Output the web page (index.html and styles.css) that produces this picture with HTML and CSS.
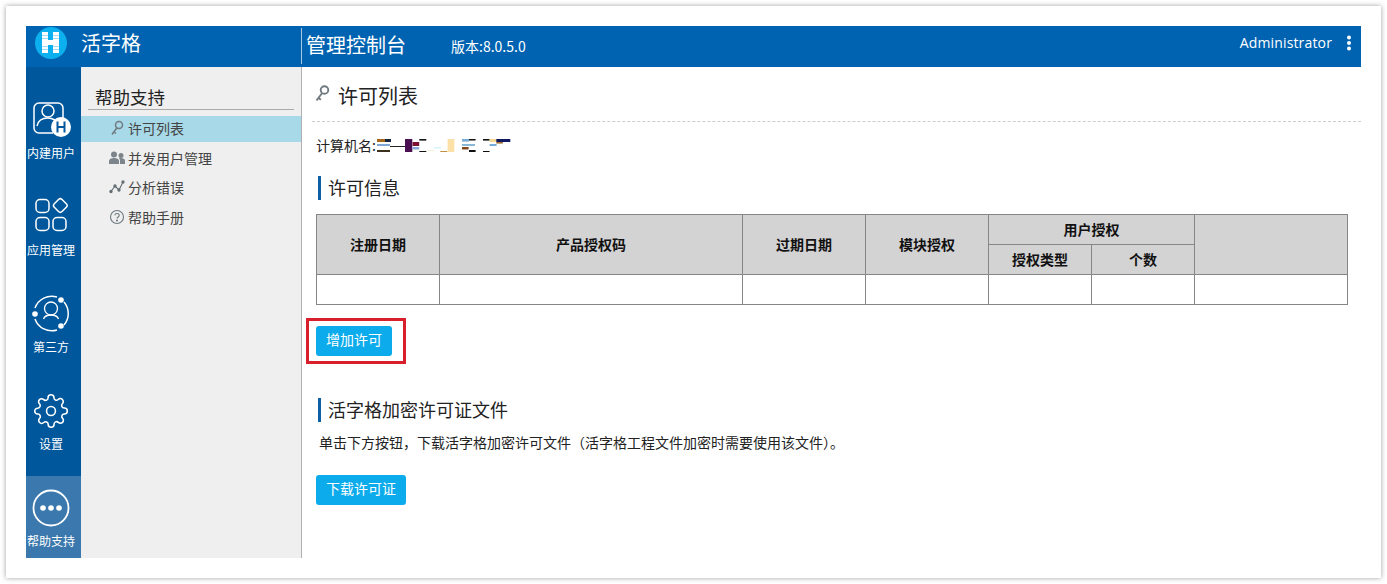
FILE: index.html
```html
<!DOCTYPE html>
<html lang="zh-CN">
<head>
<meta charset="utf-8">
<title>活字格管理控制台</title>
<link rel="stylesheet" href="styles.css">
</head>
<body>
<div class="frame">
  <div class="app">
    <header class="topbar">
      <div class="brand">
        <svg class="logo" viewBox="0 0 32 32" width="32" height="32">
          <circle cx="16" cy="16" r="16" fill="#0cb0ee"/>
          <path d="M7 5h6v21H7zM18 5h6v21h-6zM13 13h5v5h-5z" fill="#fff"/>
          <path d="M7 8.500h6M7 11.500h6M7 19.500h6M7 22.500h6M18 8.500h6M18 11.500h6M18 19.500h6M18 22.500h6" stroke="#9fe0f8" stroke-width="1"/>
        </svg>
        <span class="brand-name">活字格</span>
      </div>
      <div class="console">
        <span class="console-name">管理控制台</span>
        <span class="version">版本:8.0.5.0</span>
      </div>
      <div class="user">
        <span class="user-name">Administrator</span>
        <svg class="more" viewBox="0 0 4 16" width="4" height="16"><circle cx="2" cy="2.500" r="2" fill="#fff"/><circle cx="2" cy="8" r="2" fill="#fff"/><circle cx="2" cy="13.500" r="2" fill="#fff"/></svg>
      </div>
    </header>
    <div class="body">
      <nav class="rail">
        <a class="rail-item">
          <svg class="rail-icon" viewBox="0 0 40 40" width="40" height="40" fill="none" stroke="#fff" stroke-width="1.500">
            <path d="M22 33H8a5 5 0 0 1-5-5V8a5 5 0 0 1 5-5h19a5 5 0 0 1 5 5v11"/>
            <circle cx="17" cy="11" r="6"/>
            <path d="M6 26c1-5 4-8 11-8 3 0 5 1 7 2"/>
            <circle cx="30" cy="27" r="10" fill="#fff" stroke="none"/>
            <path d="M26.500 21.500v11M33.500 21.500v11M26.500 27h7" stroke="#00579c" stroke-width="2"/>
          </svg>
          <span>内建用户</span>
        </a>
        <a class="rail-item">
          <svg class="rail-icon" viewBox="0 0 40 40" width="40" height="40" fill="none" stroke="#fff" stroke-width="1.500">
            <rect x="5" y="2.500" width="13" height="13" rx="4"/>
            <rect x="23.800" y="3" width="11" height="11" rx="2.500" transform="rotate(45 29.300 8.500)"/>
            <rect x="5" y="20.500" width="13" height="13" rx="4"/>
            <rect x="22" y="20.500" width="13" height="13" rx="4"/>
          </svg>
          <span>应用管理</span>
        </a>
        <a class="rail-item">
          <svg class="rail-icon" viewBox="0 0 40 40" width="40" height="40" fill="none" stroke="#fff" stroke-width="1.500">
            <path d="M4 14A17.700 17.700 0 0 1 26 3M33 8A17.700 17.700 0 0 1 33 31M26 36A17.700 17.700 0 0 1 4 25"/>
            <circle cx="20" cy="14.500" r="6.500" stroke-width="1.300"/>
            <path d="M12.500 25c1-3 3.500-4 7.500-4s6.500 1 7.500 4" stroke-width="1.300"/>
            <circle cx="30" cy="6" r="2.800" fill="#fff" stroke="none"/>
            <circle cx="30" cy="32" r="2.800" fill="#fff" stroke="none"/>
            <circle cx="4" cy="20" r="2.800" fill="#fff" stroke="none"/>
          </svg>
          <span>第三方</span>
        </a>
        <a class="rail-item">
          <svg class="rail-icon" viewBox="-1.500 -1.500 27 27" width="40" height="40" fill="none" stroke="#fff" stroke-width="1.050">
            <circle cx="12" cy="12" r="3"/>
            <path d="M19.400 15a1.650 1.650 0 0 0 .33 1.820l.06.06a2 2 0 0 1 0 2.830 2 2 0 0 1-2.830 0l-.06-.06a1.650 1.650 0 0 0-1.820-.33 1.650 1.650 0 0 0-1 1.510V21a2 2 0 0 1-2 2 2 2 0 0 1-2-2v-.09A1.650 1.650 0 0 0 9 19.400a1.650 1.650 0 0 0-1.820.33l-.06.06a2 2 0 0 1-2.830 0 2 2 0 0 1 0-2.830l.06-.06a1.650 1.650 0 0 0 .33-1.820 1.650 1.650 0 0 0-1.510-1H3a2 2 0 0 1-2-2 2 2 0 0 1 2-2h.09A1.650 1.650 0 0 0 4.600 9a1.650 1.650 0 0 0-.33-1.820l-.06-.06a2 2 0 0 1 0-2.830 2 2 0 0 1 2.830 0l.06.06a1.650 1.650 0 0 0 1.820.33H9a1.650 1.650 0 0 0 1-1.510V3a2 2 0 0 1 2-2 2 2 0 0 1 2 2v.09a1.650 1.650 0 0 0 1 1.510 1.650 1.650 0 0 0 1.820-.33l.06-.06a2 2 0 0 1 2.830 0 2 2 0 0 1 0 2.830l-.06.06a1.650 1.650 0 0 0-.33 1.820V9a1.650 1.650 0 0 0 1.510 1H21a2 2 0 0 1 2 2 2 2 0 0 1-2 2h-.09a1.650 1.650 0 0 0-1.510 1z"/>
          </svg>
          <span>设置</span>
        </a>
        <a class="rail-item active">
          <svg class="rail-icon" viewBox="0 0 40 40" width="40" height="40" fill="none" stroke="#fff" stroke-width="1.800">
            <circle cx="20" cy="20" r="17.500"/>
            <circle cx="12" cy="20" r="2.800" fill="#fff" stroke="none"/>
            <circle cx="20" cy="20" r="2.800" fill="#fff" stroke="none"/>
            <circle cx="28" cy="20" r="2.800" fill="#fff" stroke="none"/>
          </svg>
          <span>帮助支持</span>
        </a>
      </nav>
      <aside class="submenu">
        <h2 class="submenu-title">帮助支持</h2>
        <ul class="submenu-list">
          <li class="submenu-item selected">
            <svg viewBox="0 0 16 16" width="16" height="16" fill="none" stroke="#6f7a80" stroke-width="1.500"><circle cx="10" cy="5" r="3.500"/><path d="M7.800 8 3 14.500M5 12l2 1.500"/></svg>
            <span>许可列表</span>
          </li>
          <li class="submenu-item">
            <svg viewBox="0 0 16 16" width="16" height="16" fill="#7c858b"><circle cx="5" cy="4.500" r="3"/><circle cx="12" cy="5.500" r="2.500"/><path d="M0 14v-3c0-2 2-3 5-3s5 1 5 3v3zM11 14v-3.500c0-1-.4-1.700-1-2.200 3-.6 6 .3 6 2.700v3z"/></svg>
            <span>并发用户管理</span>
          </li>
          <li class="submenu-item">
            <svg viewBox="0 0 16 16" width="16" height="16" fill="#636c72" stroke="#636c72" stroke-width="1.100"><path d="M2 12.500 6 7l4 4 4-8" fill="none"/><circle cx="2" cy="12.500" r="1.100"/><circle cx="6" cy="7" r="1.100"/><circle cx="10" cy="11" r="1.100"/><circle cx="14" cy="3" r="1.100"/></svg>
            <span>分析错误</span>
          </li>
          <li class="submenu-item">
            <svg viewBox="0 0 16 16" width="16" height="16" fill="none" stroke="#6f7a80" stroke-width="1.100"><circle cx="8" cy="8" r="6.500"/><path d="M5.800 6.300C6 5 7 4.500 8 4.500c1.300 0 2.200.8 2.200 1.900 0 1.500-2.200 1.600-2.200 3.200"/><circle cx="8" cy="11.500" r=".5"/></svg>
            <span>帮助手册</span>
          </li>
        </ul>
      </aside>
      <main class="content">
        <div class="page-head">
          <svg viewBox="0 0 16 18" width="16" height="20" fill="none" stroke="#6f7a80" stroke-width="1.900"><circle cx="10.500" cy="5" r="3.800"/><path d="M8 8.200 2.500 15.500M4.500 13l2.400 1.700"/></svg>
          <h1 class="page-title">许可列表</h1>
        </div>
        <div class="machine">
          <span>计算机名:</span>
          <svg class="masked" viewBox="0 0 134 13" width="134" height="13">
            <rect x="0" y="0" width="8" height="3" fill="#a8651c"/><rect x="8" y="0" width="6" height="3" fill="#16243f"/>
            <rect x="0" y="5" width="13" height="2" fill="#7fa8d8"/><rect x="0" y="11" width="13" height="2" fill="#3c3020"/>
            <rect x="13" y="7" width="15" height="1" fill="#222"/><rect x="28" y="0" width="7.300" height="13" fill="#4a0f50"/>
            <rect x="35.600" y="3" width="6.600" height="4" fill="#7b1030"/><rect x="35.600" y="8" width="6.600" height="2.500" fill="#88a8d8"/>
            <rect x="42.300" y="0" width="7" height="1.600" fill="#111"/><rect x="42.300" y="12" width="7" height="1" fill="#111"/>
            <rect x="50" y="11" width="7" height="1" fill="#f5f0d8"/><rect x="57" y="8" width="7" height="1.500" fill="#d8f4fc"/>
            <rect x="63.300" y="12" width="7" height="1" fill="#c09040"/><rect x="70.600" y="0" width="6.700" height="13" fill="#fbe0a8"/>
            <rect x="85" y="0" width="7" height="2.600" fill="#78acd8"/><rect x="92" y="0" width="6.600" height="1.500" fill="#111"/>
            <rect x="85" y="5" width="13" height="2" fill="#88b8d8"/><rect x="85" y="8" width="6.600" height="2.500" fill="#80481c"/><rect x="92" y="11" width="6.600" height="2" fill="#111"/>
            <rect x="106" y="0" width="6.600" height="1.600" fill="#111"/><rect x="106" y="12" width="6.600" height="1" fill="#111"/>
            <rect x="112.600" y="0" width="7" height="3" fill="#f4d890"/><rect x="119.300" y="0" width="14" height="3" fill="#101860"/>
            <rect x="112.600" y="5" width="7" height="2" fill="#78acd8"/><rect x="119.300" y="3" width="6.600" height="1.600" fill="#a07030"/>
          </svg>
        </div>
        <h3 class="section-title first">许可信息</h3>
        <table class="license">
          <colgroup>
            <col class="c-date"><col class="c-code"><col class="c-date"><col class="c-date"><col class="c-sub"><col class="c-sub"><col class="c-last">
          </colgroup>
          <thead>
            <tr><th rowspan="2">注册日期</th><th rowspan="2">产品授权码</th><th rowspan="2">过期日期</th><th rowspan="2">模块授权</th><th colspan="2">用户授权</th><th rowspan="2"></th></tr>
            <tr><th>授权类型</th><th>个数</th></tr>
          </thead>
          <tbody>
            <tr><td></td><td></td><td></td><td></td><td></td><td></td><td></td></tr>
          </tbody>
        </table>
        <div class="add-wrap">
          <button class="btn">增加许可</button>
          <div class="highlight"></div>
        </div>
        <h3 class="section-title second">活字格加密许可证文件</h3>
        <p class="desc">单击下方按钮，下载活字格加密许可文件（活字格工程文件加密时需要使用该文件）。</p>
        <button class="btn download">下载许可证</button>
      </main>
    </div>
  </div>
</div>
</body>
</html>
```
FILE: styles.css
```css
* { box-sizing: border-box; }
html, body { margin: 0; padding: 0; }
body {
  width: 1387px;
  height: 584px;
  overflow: hidden;
  background: #fff;
  font-family: "Noto Sans CJK SC", "Open Sans", sans-serif;
  color: #222;
}
.frame {
  margin: 6px 6px 0;
  width: 1375px;
  height: 572px;
  padding: 20px;
  background: #fff;
  box-shadow: 0 0 5px rgba(0, 0, 0, .38);
}
.app { width: 1335px; height: 532px; display: flex; flex-direction: column; }
.topbar {
  height: 41px;
  flex: none;
  background: #0063b1;
  color: #fff;
  display: flex;
  align-items: center;
}
.brand { width: 275px; height: 100%; display: flex; align-items: center; padding: 0 0 7px 9px; flex: none; }
.logo { flex: none; }
.brand-name { margin-left: 14px; font-size: 20px; line-height: 26px; }
.console {
  height: 36px;
  align-self: flex-start;
  margin-top: 2px;
  border-left: 1px solid #a8c8e2;
  padding: 0 0 3px 4px;
  display: flex;
  align-items: center;
  flex: none;
}
.console-name { font-size: 20px; line-height: 26px; }
.version { margin-left: 45px; font-size: 14px; line-height: 18px; padding-top: 2px; font-family: "Noto Sans CJK SC", sans-serif; }
.user {
  margin-left: auto;
  display: flex;
  align-items: center;
  padding: 0 10px 7px 0;
  font-size: 14px;
  letter-spacing: .15px;
  font-family: "Open Sans", sans-serif;
}
.user-name { padding-bottom: 2px; }
.more { margin-left: 15px; }
.body { flex: 1; display: flex; min-height: 0; }
.rail {
  width: 55px;
  flex: none;
  background: #00579c;
  padding-top: 21px;
  display: flex;
  flex-direction: column;
  gap: 15px;
}
.rail-item {
  height: 82px;
  flex: none;
  padding: 12px 5px 0 0;
  display: flex;
  flex-direction: column;
  align-items: center;
  color: #fff;
  font-size: 12px;
  line-height: 16px;
  white-space: nowrap;
}
.rail-item span { margin-top: 5px; }
.rail-icon { flex: none; }
.rail-item.active { background: #3a78ad; }
.submenu {
  width: 221px;
  flex: none;
  background: #efefef;
  border-right: 1px solid #b0b0b0;
  padding-top: 17px;
}
.submenu-title {
  margin: 0 7px;
  padding-left: 7px;
  font-size: 17.500px;
  font-weight: 400;
  line-height: 25px;
  height: 26px;
  border-bottom: 1px solid #aaa;
  color: #222;
}
.submenu-list { list-style: none; margin: 6px 0 0; padding: 0; }
.submenu-item {
  height: 29.500px;
  display: flex;
  align-items: center;
  padding: 0 0 2px 28px;
  font-size: 14px;
  color: #444;
  gap: 3px;
}
.submenu-item.selected { height: 26px; background: #a8d9e8; margin-bottom: 2px; }
.content { flex: 1; min-width: 0; background: #fff; }
.page-head {
  height: 55px;
  margin-left: 10px;
  padding-left: 2px;
  border-bottom: 1px dashed #ccc;
  display: flex;
  align-items: center;
  gap: 8px;
}
.page-title { margin: 4px 0 0; font-size: 20px; font-weight: 400; line-height: 28px; color: #222; }
.machine {
  margin: 13px 0 0 14px;
  height: 20px;
  display: flex;
  align-items: center;
  font-size: 14px;
  color: #222;
}
.masked { margin-left: 1px; flex: none; }
.section-title {
  margin: 0 0 0 16px;
  border-left: 3px solid #0f5fa6;
  padding-left: 7px;
  height: 24px;
  font-size: 18px;
  font-weight: 400;
  line-height: 22px;
  color: #222;
}
.section-title.first { margin-top: 21px; }
.section-title.second { margin-top: 42px; }
.license {
  margin: 14px 0 0 14px;
  width: 1032px;
  border-collapse: collapse;
  table-layout: fixed;
}
.c-date { width: 123px; }
.c-code { width: 303px; }
.c-sub { width: 103px; }
.c-last { width: 153px; }
.license th, .license td { border: 1px solid #868686; height: 30px; padding: 0; }
.license th { background: #d3d3d3; font-size: 14px; font-weight: 700; color: #111; padding-bottom: 2px; }
.add-wrap { position: relative; margin: 21px 0 0 14px; width: 76px; height: 30px; }
.btn {
  display: block;
  height: 30px;
  width: 76px;
  border: 0;
  border-radius: 3px;
  background: #0cabec;
  color: #fff;
  padding: 0 0 4px;
  font-family: inherit;
  font-size: 14px;
}
.highlight {
  position: absolute;
  left: -10px;
  top: -8px;
  width: 100px;
  height: 46px;
  border: 3px solid #d8202c;
}
.desc { margin: 11px 0 0 17px; font-size: 14px; line-height: 18px; color: #222; padding-bottom: 2px; }
.btn.download { margin: 22px 0 0 14px; width: 90px; }
```
